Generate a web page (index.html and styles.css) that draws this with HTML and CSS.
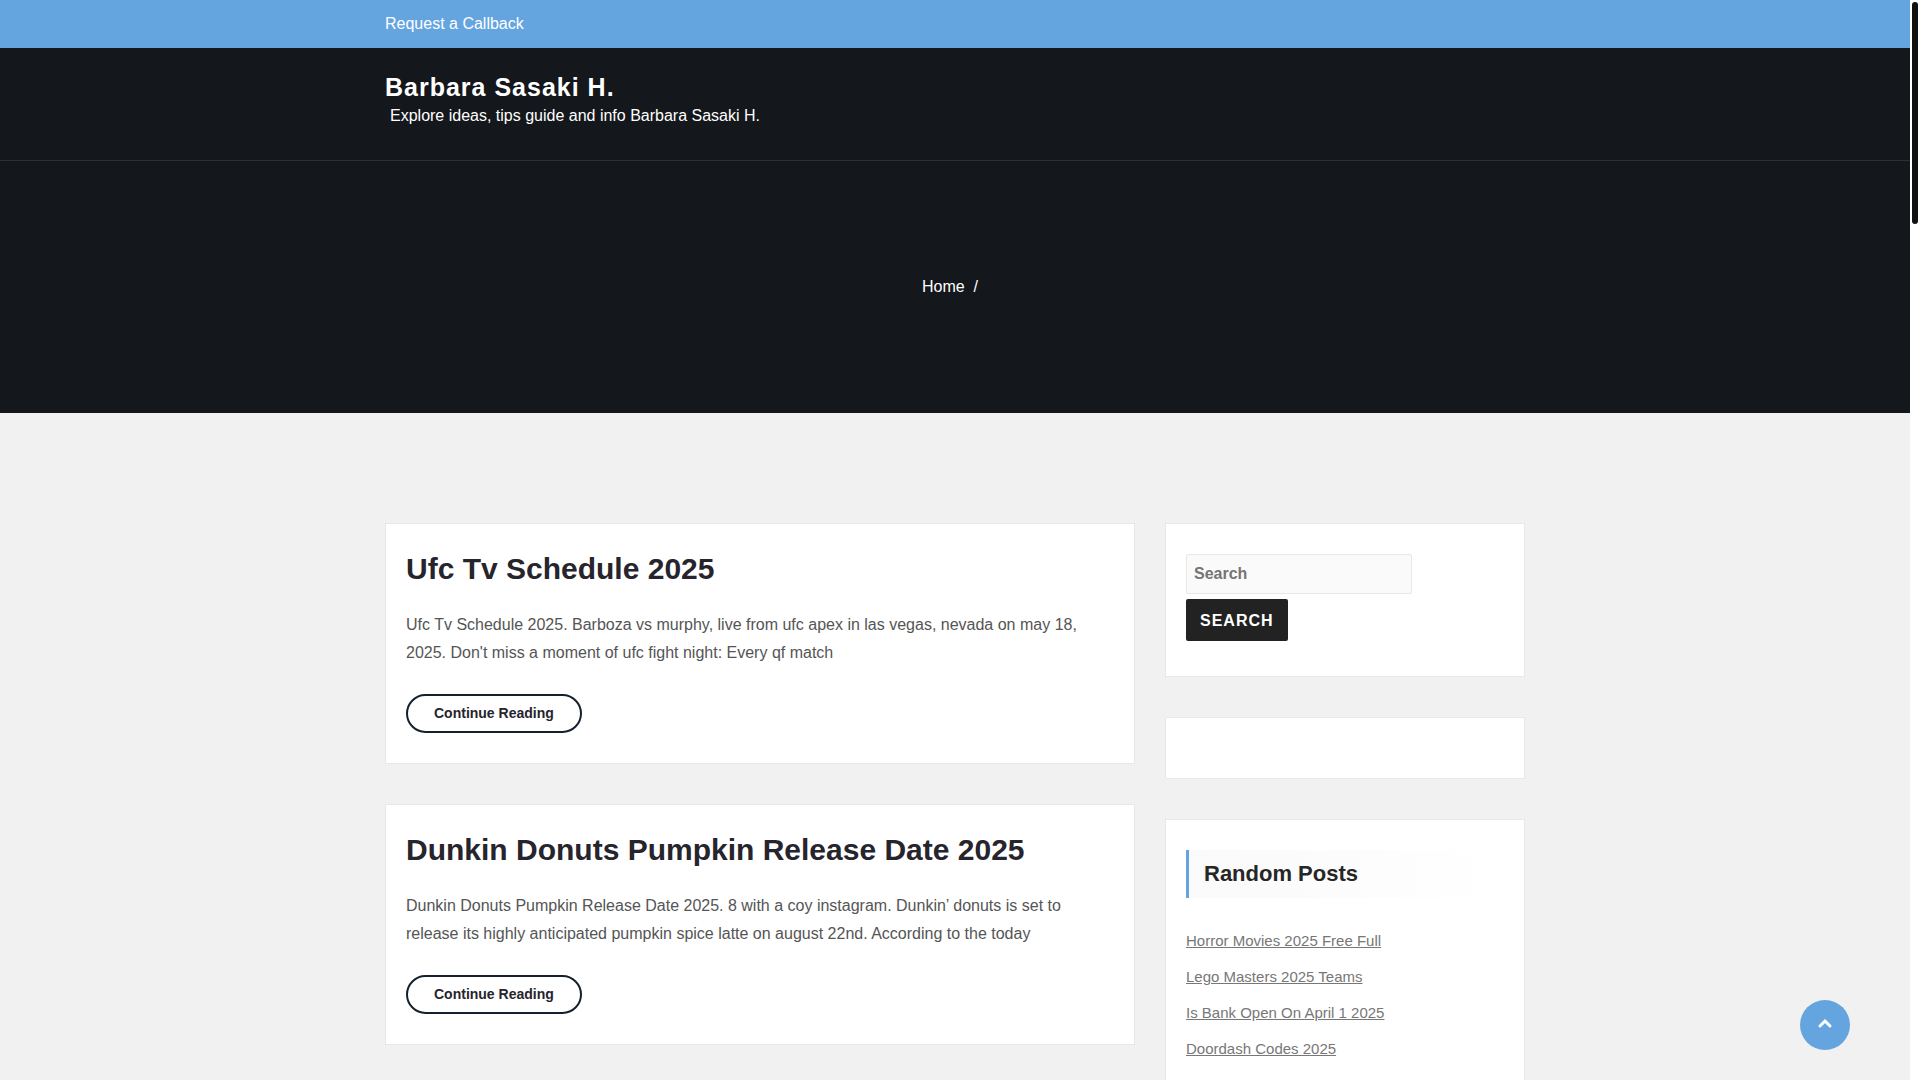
FILE: index.html
```html
<!DOCTYPE html>
<html lang="en">
<head>
<meta charset="utf-8">
<meta name="viewport" content="width=device-width, initial-scale=1">
<title>Barbara Sasaki H.</title>
<link rel="stylesheet" href="styles.css">
</head>
<body>
<div class="topbar">
  <div class="container"><a class="topbar-link" href="#">Request a Callback</a></div>
</div>
<header class="site-header">
  <div class="container">
    <h1 class="site-title"><a href="#">Barbara Sasaki H.</a></h1>
    <p class="tagline">Explore ideas, tips guide and info Barbara Sasaki H.</p>
  </div>
</header>
<nav class="banner" aria-label="Breadcrumb">
  <ul class="breadcrumb">
    <li><a href="#">Home</a></li>
    <li>/</li>
  </ul>
</nav>
<div class="container content">
  <main class="posts">
    <article class="card">
      <h2 class="post-title"><a href="#">Ufc Tv Schedule 2025</a></h2>
      <p class="excerpt">Ufc Tv Schedule 2025. Barboza vs murphy, live from ufc apex in las vegas, nevada on may 18, 2025. Don't miss a moment of ufc fight night: Every qf match</p>
      <a class="more" href="#">Continue Reading</a>
    </article>
    <article class="card">
      <h2 class="post-title"><a href="#">Dunkin Donuts Pumpkin Release Date 2025</a></h2>
      <p class="excerpt">Dunkin Donuts Pumpkin Release Date 2025. 8 with a coy instagram. Dunkin’ donuts is set to release its highly anticipated pumpkin spice latte on august 22nd. According to the today</p>
      <a class="more" href="#">Continue Reading</a>
    </article>
  </main>
  <aside class="sidebar">
    <section class="card">
      <form class="search" role="search">
        <input class="search-field" type="search" placeholder="Search" aria-label="Search">
        <button class="search-submit" type="button">SEARCH</button>
      </form>
    </section>
    <section class="card"></section>
    <section class="card">
      <h2 class="widget-title">Random Posts</h2>
      <ul class="post-list">
        <li><a href="#">Horror Movies 2025 Free Full</a></li>
        <li><a href="#">Lego Masters 2025 Teams</a></li>
        <li><a href="#">Is Bank Open On April 1 2025</a></li>
        <li><a href="#">Doordash Codes 2025</a></li>
      </ul>
    </section>
  </aside>
</div>
<button class="to-top" type="button" aria-label="Back to top">
  <svg width="16" height="11" viewBox="0 0 16 11" aria-hidden="true"><path d="M3 8 8 3l5 5" fill="none" stroke="#fff" stroke-width="3" stroke-linecap="round"/></svg>
</button>
<div class="scroll-rail" aria-hidden="true"><div class="scroll-thumb"></div></div>
</body>
</html>
```
FILE: styles.css
```css
* { box-sizing: border-box; }

html { scrollbar-width: none; }

body {
  margin: 0;
  padding-right: 10px;
  background: #f1f1f1;
  color: #555;
  font: 16px/28px "Liberation Sans", Arial, sans-serif;
}

h1, h2, p, ul { margin: 0; padding: 0; }
ul { list-style: none; }
a { color: inherit; text-decoration: none; }

.container {
  width: 100%;
  max-width: 1140px;
  margin: 0 auto;
}

.topbar {
  padding: 10px 0;
  background: #64a5e0;
  color: #fff;
}
.topbar-link { display: block; }

.site-header {
  padding: 24px 0 30px;
  background: #14171b;
  border-bottom: 1px solid #2c2f34;
  color: #fff;
}
.site-title {
  font-size: 25px;
  line-height: 30px;
  letter-spacing: 1px;
}
.tagline {
  padding: 0 5px;
}

.banner {
  padding: 112px 0;
  background: #14171b;
  color: #fff;
}
.breadcrumb {
  display: flex;
  justify-content: center;
  gap: 9px;
  padding-right: 10px;
}

.content {
  display: grid;
  grid-template-columns: minmax(0, 25fr) minmax(0, 12fr);
  gap: 30px;
  align-items: start;
  padding: 110px 0 40px;
}
.posts, .sidebar {
  display: grid;
  gap: 40px;
}

.card {
  padding: 30px 20px;
  background: #fff;
  border: 1px solid #e7e7e7;
}

.post-title {
  color: #26242c;
  font-size: 30px;
  line-height: 30px;
}
.excerpt { margin: 27px 0; }

.more {
  display: block;
  width: fit-content;
  padding: 0 26px;
  border: 2px solid #14202e;
  border-radius: 20px;
  color: #26242c;
  font-size: 14px;
  font-weight: bold;
  line-height: 35px;
}

.search {
  display: flex;
  flex-direction: column;
  align-items: flex-start;
  gap: 5px;
  padding-bottom: 5px;
}
.search-field {
  width: 226px;
  max-width: 100%;
  height: 40px;
  padding: 0 7px;
  background: #fafafa;
  border: 1px solid #e7e7e7;
  border-radius: 2px;
  font: bold 16px "Liberation Sans", Arial, sans-serif;
}
.search-field::placeholder { color: #757575; }
.search-submit {
  height: 42px;
  padding: 2px 14px 0;
  background: #222;
  border: 0;
  border-radius: 2px;
  color: #fff;
  font: bold 16px "Liberation Sans", Arial, sans-serif;
  letter-spacing: 1px;
}

.widget-title {
  margin-bottom: 25px;
  padding-left: 15px;
  background: linear-gradient(to right, #fafafa, #fff);
  border-left: 3px solid #64a5e0;
  color: #262626;
  font-size: 22px;
  line-height: 48px;
}
.post-list {
  color: #777;
  font-size: 15px;
  line-height: 36px;
}
.post-list a { text-decoration: underline; }

.to-top {
  position: fixed;
  right: 70px;
  bottom: 30px;
  display: grid;
  place-items: center;
  width: 50px;
  height: 50px;
  padding: 0 0 4px;
  background: #64a5e0;
  border: 0;
  border-radius: 50%;
}

.scroll-rail {
  position: fixed;
  top: 0;
  right: 0;
  bottom: 0;
  width: 10px;
  padding: 2px;
  background: #fff;
}
.scroll-thumb {
  height: 222px;
  background: #111;
  border-radius: 3px;
}
```
